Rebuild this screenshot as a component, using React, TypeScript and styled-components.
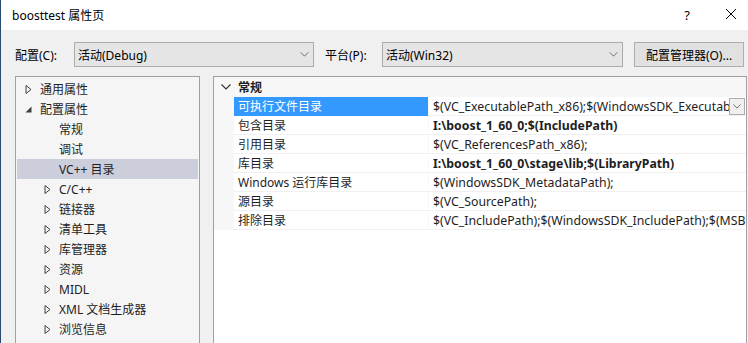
import React from "react";
import styled, { createGlobalStyle } from "styled-components";

const FONT = `"Noto Sans", "Noto Sans CJK SC", sans-serif`;

const GlobalStyle = createGlobalStyle`
  html, body {
    margin: 0;
    padding: 0;
    background: #ffffff;
  }
  body {
    font-family: ${FONT};
    font-size: 12px;
    color: #1e1e1e;
  }
`;

const TREE_ITEMS = [
  { label: "通用属性", level: 0, arrow: "closed" },
  { label: "配置属性", level: 0, arrow: "open" },
  { label: "常规", level: 1, arrow: "none" },
  { label: "调试", level: 1, arrow: "none" },
  { label: "VC++ 目录", level: 1, arrow: "none", selected: true },
  { label: "C/C++", level: 1, arrow: "closed" },
  { label: "链接器", level: 1, arrow: "closed" },
  { label: "清单工具", level: 1, arrow: "closed" },
  { label: "库管理器", level: 1, arrow: "closed" },
  { label: "资源", level: 1, arrow: "closed" },
  { label: "MIDL", level: 1, arrow: "closed" },
  { label: "XML 文档生成器", level: 1, arrow: "closed" },
  { label: "浏览信息", level: 1, arrow: "closed" },
];

const PROPS = [
  { name: "可执行文件目录", value: "$(VC_ExecutablePath_x86);$(WindowsSDK_ExecutablePath);$(VS_ExecutablePath)", selected: true },
  { name: "包含目录", value: "I:\\boost_1_60_0;$(IncludePath)", bold: true },
  { name: "引用目录", value: "$(VC_ReferencesPath_x86);" },
  { name: "库目录", value: "I:\\boost_1_60_0\\stage\\lib;$(LibraryPath)", bold: true },
  { name: "Windows 运行库目录", value: "$(WindowsSDK_MetadataPath);" },
  { name: "源目录", value: "$(VC_SourcePath);" },
  { name: "排除目录", value: "$(VC_IncludePath);$(WindowsSDK_IncludePath);$(MSBuild_ExecutablePath)" },
];

const Window = styled.div`
  width: 748px;
  height: 343px;
  overflow: hidden;
  box-sizing: border-box;
  border-left: 1px solid #2b4a6f;
  display: flex;
  flex-direction: column;
`;

const TitleBar = styled.div`
  height: 30px;
  flex: none;
  background: #ffffff;
  display: flex;
  align-items: center;
  padding-left: 11px;
`;

const Title = styled.div`
  flex: 1;
  font-size: 12px;
  color: #000;
`;

const TitleButton = styled.div<{ $w: number }>`
  width: ${(p) => p.$w}px;
  text-align: center;
  font-size: 13px;
  color: #000;
`;

const Body = styled.div`
  flex: 1;
  background: #f0f0f0;
  display: flex;
  flex-direction: column;
  padding: 12px 0 0 14px;
`;

const Toolbar = styled.div`
  display: flex;
  align-items: center;
  height: 25px;
`;

const Label = styled.div<{ $w: number }>`
  width: ${(p) => p.$w}px;
  color: #000;
`;

const Combo = styled.div<{ $w: number }>`
  width: ${(p) => p.$w}px;
  height: 25px;
  box-sizing: border-box;
  background: #e5e5e5;
  border: 1px solid #acacac;
  display: flex;
  align-items: center;
  padding: 0 4px 0 3px;
  color: #000;
`;

const ComboText = styled.div`
  flex: 1;
`;

const Button = styled.div`
  margin-left: 11px;
  width: 110px;
  height: 25px;
  box-sizing: border-box;
  background: #e1e1e1;
  border: 1px solid #adadad;
  display: flex;
  align-items: center;
  justify-content: center;
  color: #000;
`;

const Panels = styled.div`
  display: flex;
  margin-top: 9px;
  flex: 1;
  gap: 13px;
`;

const Tree = styled.div`
  width: 185px;
  box-sizing: border-box;
  height: 300px;
  background: #f5f5f5;
  border: 1px solid #a0a0a0;
  padding: 2px 1px 0 1px;
`;

const TreeRow = styled.div<{ $level: number; $selected?: boolean }>`
  height: 20px;
  display: flex;
  align-items: center;
  padding-left: ${(p) => 8 + p.$level * 19}px;
  background: ${(p) => (p.$selected ? "#cccedb" : "transparent")};
  color: #1e1e1e;
`;

const Arrow = styled.span`
  width: 15px;
  display: flex;
  align-items: center;
`;

const Grid = styled.div`
  width: 534px;
  height: 300px;
  box-sizing: border-box;
  background: #ffffff;
  border: 1px solid #a0a0a0;
`;

const Category = styled.div`
  height: 20px;
  display: flex;
  align-items: center;
  background: #f7f7f7;
  font-weight: bold;
  color: #1e1e1e;
`;

const Chevron = styled.div`
  width: 24px;
  display: flex;
  justify-content: center;
`;

const PropRow = styled.div`
  height: 19px;
  display: flex;
  background: #f7f7f7;
`;

const Gutter = styled.div`
  width: 20px;
  flex: none;
`;

const NameCell = styled.div<{ $selected?: boolean }>`
  width: 194px;
  flex: none;
  box-sizing: border-box;
  padding-left: 4px;
  display: flex;
  align-items: center;
  background: ${(p) => (p.$selected ? "#3399ff" : "#ffffff")};
  color: ${(p) => (p.$selected ? "#ffffff" : "#1e1e1e")};
  border-bottom: 1px solid ${(p) => (p.$selected ? "#3399ff" : "#f0f0f0")};
  margin-right: 1px;
`;

const ValueCell = styled.div<{ $bold?: boolean }>`
  flex: 1;
  min-width: 0;
  box-sizing: border-box;
  padding-left: 4px;
  display: flex;
  align-items: center;
  background: #ffffff;
  border-bottom: 1px solid #f0f0f0;
  font-size: 12.3px;
  font-weight: ${(p) => (p.$bold ? "bold" : "normal")};
  color: #1e1e1e;
  white-space: nowrap;
  overflow: hidden;
`;

const ValueText = styled.span`
  flex: 1;
  overflow: hidden;
`;

const DropButton = styled.div`
  width: 16px;
  height: 17px;
  flex: none;
  box-sizing: border-box;
  border: 1px solid #acacac;
  background: #f0f0f0;
  display: flex;
  align-items: center;
  justify-content: center;
  margin-right: 1px;
`;

const ChevronDown = ({ size = 9, color = "#606060" }: { size?: number; color?: string }) => (
  <svg width={size} height={Math.round(size * 0.6)} viewBox="0 0 10 6">
    <path d="M0.5 0.5 L5 5 L9.5 0.5" fill="none" stroke={color} strokeWidth="1.1" />
  </svg>
);

const TreeArrow = ({ kind }: { kind: string }) => {
  if (kind === "closed")
    return (
      <svg width="7" height="9" viewBox="0 0 7 9">
        <path d="M1 0.5 L6 4.5 L1 8.5 Z" fill="none" stroke="#404040" strokeWidth="1" />
      </svg>
    );
  if (kind === "open")
    return (
      <svg width="7" height="7" viewBox="0 0 7 7">
        <path d="M6.5 0.5 L6.5 6.5 L0.5 6.5 Z" fill="#404040" />
      </svg>
    );
  return null;
};

export default function App() {
  return (
    <>
      <GlobalStyle />
      <Window>
        <TitleBar>
          <Title>boosttest 属性页</Title>
          <TitleButton $w={20}>?</TitleButton>
          <TitleButton $w={24} style={{ marginLeft: 22, marginRight: 5 }}>
            <svg width="12" height="12" viewBox="0 0 12 12">
              <path d="M1 1 L11 11 M11 1 L1 11" stroke="#000" strokeWidth="1" />
            </svg>
          </TitleButton>
        </TitleBar>
        <Body>
          <Toolbar>
            <Label $w={59}>配置(C):</Label>
            <Combo $w={240}>
              <ComboText>活动(Debug)</ComboText>
              <ChevronDown />
            </Combo>
            <Label $w={57} style={{ paddingLeft: 11 }}>平台(P):</Label>
            <Combo $w={241}>
              <ComboText>活动(Win32)</ComboText>
              <ChevronDown />
            </Combo>
            <Button>配置管理器(O)...</Button>
          </Toolbar>
          <Panels>
            <Tree>
              {TREE_ITEMS.map((item) => (
                <TreeRow key={item.label} $level={item.level} $selected={item.selected}>
                  <Arrow>
                    <TreeArrow kind={item.arrow} />
                  </Arrow>
                  {item.label}
                </TreeRow>
              ))}
            </Tree>
            <Grid>
              <Category>
                <Chevron>
                  <ChevronDown size={10} color="#303030" />
                </Chevron>
                常规
              </Category>
              {PROPS.map((p) => (
                <PropRow key={p.name}>
                  <Gutter />
                  <NameCell $selected={p.selected}>{p.name}</NameCell>
                  <ValueCell $bold={p.bold}>
                    <ValueText>{p.value}</ValueText>
                    {p.selected && (
                      <DropButton>
                        <ChevronDown size={8} />
                      </DropButton>
                    )}
                  </ValueCell>
                </PropRow>
              ))}
            </Grid>
          </Panels>
        </Body>
      </Window>
    </>
  );
}
